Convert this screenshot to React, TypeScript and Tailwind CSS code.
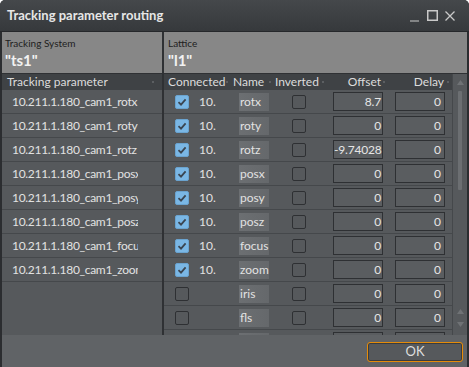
import React from "react";

type Row = { c: boolean; name: string; off: string };

const rows: Row[] = [
  { c: true, name: "rotx", off: "8.7" },
  { c: true, name: "roty", off: "0" },
  { c: true, name: "rotz", off: "-9.74028" },
  { c: true, name: "posx", off: "0" },
  { c: true, name: "posy", off: "0" },
  { c: true, name: "posz", off: "0" },
  { c: true, name: "focus", off: "0" },
  { c: true, name: "zoom", off: "0" },
  { c: false, name: "iris", off: "0" },
  { c: false, name: "fls", off: "0" },
  { c: false, name: "", off: "0" },
];

const left = ["rotx", "roty", "rotz", "posx", "posy", "posz", "focus", "zoom"];

function Check({ on }: { on: boolean }) {
  if (on)
    return (
      <div className="w-[14px] h-[14px] rounded-[2px] bg-[#7ab7e5] border border-[#6aa3cf] flex items-center justify-center">
        <svg width="10" height="10" viewBox="0 0 10 10">
          <path d="M1.5 5.2 L4 7.6 L8.6 2.4" fill="none" stroke="#3b4652" strokeWidth="1.8" />
        </svg>
      </div>
    );
  return <div className="w-[14px] h-[14px] rounded-[2px] border border-[#2e3033]" />;
}

function Dot() {
  return <span className="w-[2px] h-[2px] bg-[#5c5f62] self-center" />;
}

export default function App() {
  return (
    <div className="w-[469px] h-[367px] bg-[#2b2d30] rounded-t-[5px] flex flex-col overflow-hidden font-['Lato',sans-serif] text-[12px]">
      {/* title bar */}
      <div className="h-[31px] shrink-0 flex items-center pl-[7px] pr-[14px] bg-gradient-to-b from-[#45484b] to-[#36393c] rounded-t-[5px]">
        <span className="text-[13px] font-bold text-[#e6e6e6]">Tracking parameter routing</span>
        <div className="ml-auto flex items-center gap-[7px] text-[#c9c9c9]">
          <svg width="10" height="12" viewBox="0 0 10 12">
            <path d="M0 11 H9" stroke="#c9c9c9" strokeWidth="1.2" />
          </svg>
          <svg width="11" height="11" viewBox="0 0 11 11">
            <rect x="0.75" y="0.75" width="9.5" height="9.5" fill="none" stroke="#c9c9c9" strokeWidth="1.5" />
          </svg>
          <svg width="10" height="10" viewBox="0 0 10 10">
            <path d="M0.5 0.5 L9.5 9.5 M9.5 0.5 L0.5 9.5" stroke="#c9c9c9" strokeWidth="1.3" />
          </svg>
        </div>
      </div>
      <div className="h-[1px] shrink-0 bg-[#26282b]" />
      <div className="flex-1 flex flex-col ml-[2px] mr-[2px]">
        {/* gray header */}
        <div className="h-[41px] shrink-0 flex">
          <div className="w-[160px] bg-[#878787] pl-[3px] pt-[5px] flex flex-col">
            <span className="text-[10px] leading-[12px] text-[#1e1e1e]">Tracking System</span>
            <span className="text-[15px] leading-[18px] font-bold text-[#f2f2f2] mt-[2px]">"ts1"</span>
          </div>
          <div className="w-[2px] bg-[#2f3134]" />
          <div className="flex-1 bg-[#878787] pl-[4px] pt-[5px] flex flex-col">
            <span className="text-[10px] leading-[12px] text-[#1e1e1e]">Lattice</span>
            <span className="text-[15px] leading-[18px] font-bold text-[#f2f2f2] mt-[2px]">"l1"</span>
          </div>
        </div>
        <div className="h-[1px] shrink-0 bg-[#2f3134]" />
        {/* table */}
        <div className="h-[261px] shrink-0 flex overflow-hidden">
          {/* left panel */}
          <div className="w-[160px] bg-[#56595c] flex flex-col">
            <div className="h-[16px] shrink-0 bg-[#3f4245] flex items-center pl-[5px] pr-[8px] text-[#dcdcdc] justify-between">
              <span className="leading-[16px]">Tracking parameter</span>
              <Dot />
            </div>
            {left.map((n) => (
              <div key={n} className="h-[24px] shrink-0 border-b border-[#45484b] flex items-center pl-[10px]">
                <div className="w-[126px] overflow-hidden whitespace-nowrap text-[#e2e2e2] tracking-[-0.3px]">
                  10.211.1.180_cam1_{n}
                </div>
              </div>
            ))}
          </div>
          <div className="w-[2px] bg-[#2f3134]" />
          {/* right panel */}
          <div className="flex-1 flex bg-[#56595c]">
            <div className="w-[288px] flex flex-col">
              <div className="h-[16px] shrink-0 bg-[#3f4245] flex text-[#dcdcdc] leading-[16px]">
                <div className="w-[67px] flex pl-[4px] pr-[3px] justify-between">
                  <span>Connected</span>
                  <Dot />
                </div>
                <div className="w-[41px] flex pl-[2px] pr-[1px] justify-between">
                  <span>Name</span>
                  <Dot />
                </div>
                <div className="w-[57px] flex pl-[3px] pr-[5px] justify-between">
                  <span>Inverted</span>
                  <Dot />
                </div>
                <div className="w-[60px] flex pr-[4px] justify-end gap-[2px]">
                  <span>Offset</span>
                  <Dot />
                </div>
                <div className="w-[63px] flex pr-[3px] justify-end gap-[3px]">
                  <span>Delay</span>
                  <Dot />
                </div>
              </div>
              {rows.map((r, i) => (
                <div key={i} className="h-[24px] shrink-0 border-b border-[#45484b] flex items-center">
                  <div className="w-[67px] flex items-center pl-[11px]">
                    <Check on={r.c} />
                    {r.c && <span className="ml-[10px] text-[#e2e2e2]">10.</span>}
                  </div>
                  <div className="w-[41px] pl-[8px]">
                    <div className="w-[30px] h-[18px] bg-gradient-to-r from-[#6c6f72] to-[#65686b] whitespace-nowrap overflow-visible leading-[18px] pl-[1px] text-[#e2e2e2]">
                      {r.name}
                    </div>
                  </div>
                  <div className="w-[57px] pl-[20px]">
                    <Check on={false} />
                  </div>
                  <div className="w-[60px] pl-[4px]">
                    <div className="w-[50px] h-[19px] border border-[#2e3033] bg-[#5a5d60] text-right pr-[1px] leading-[17px] text-[#e6e6e6] overflow-hidden whitespace-nowrap tracking-[-0.2px]">
                      {r.off}
                    </div>
                  </div>
                  <div className="w-[63px] pl-[6px]">
                    <div className="w-[50px] h-[19px] border border-[#2e3033] bg-[#5a5d60] text-right pr-[3px] leading-[17px] text-[#e6e6e6]">
                      0
                    </div>
                  </div>
                </div>
              ))}
            </div>
            {/* scrollbar */}
            <div className="w-[15px] border-l border-[#45484b] flex flex-col items-center">
              <svg width="7" height="5" viewBox="0 0 7 5" className="mt-[6px]">
                <path d="M0 5 L3.5 0 L7 5 Z" fill="#6f7275" />
              </svg>
              <div className="w-[4px] h-[99px] bg-[#6c6f72] mt-[6px] rounded-[1px]" />
              <div className="flex-1" />
              <svg width="7" height="5" viewBox="0 0 7 5">
                <path d="M0 5 L3.5 0 L7 5 Z" fill="#6f7275" />
              </svg>
              <svg width="7" height="5" viewBox="0 0 7 5" className="mt-[8px] mb-[8px]">
                <path d="M0 0 L7 0 L3.5 5 Z" fill="#6f7275" />
              </svg>
            </div>
          </div>
        </div>
        {/* bottom bar */}
        <div className="flex-1 bg-[#606366] flex justify-end items-start pt-[7px] pr-[4px]">
          <div className="w-[96px] h-[20px] rounded-[3px] border border-[#e58c0a] bg-[#56595c] shadow-[inset_0_0_0_1px_#3a3c3e] flex items-center justify-center text-[13px] text-[#dedede]">
            OK
          </div>
        </div>
      </div>
    </div>
  );
}
